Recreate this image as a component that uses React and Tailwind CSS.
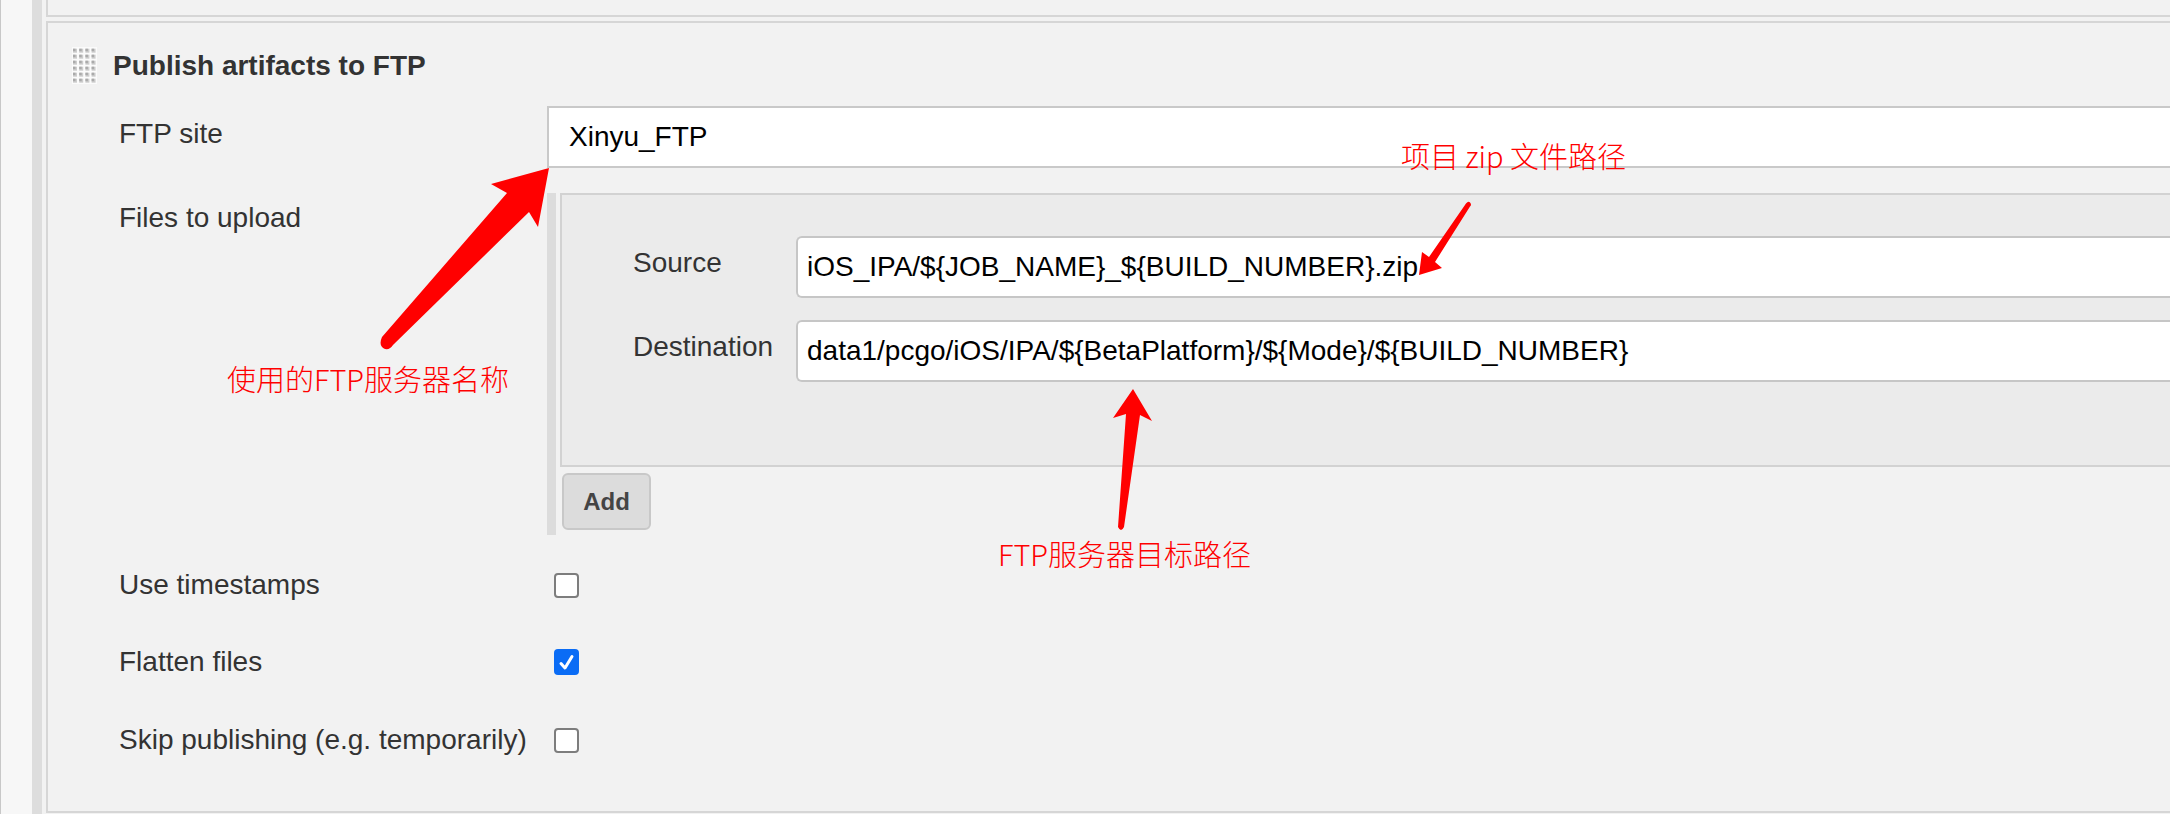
import React from 'react';

const Handle = () => {
    const cols = [0, 1, 2, 3];
    const rows = [0, 1, 2, 3, 4, 5];
    return (
        <svg width="25" height="37" viewBox="0 0 25 37" className="shrink-0">
            <rect width="25" height="37" fill="#fbfbfb" />
            {rows.map((r) =>
                cols.map((c) => (
                    <g key={`${r}-${c}`}>
                        <rect x={1 + c * 6.2} y={1.7 + r * 6} width="4" height="4" fill="#cdcdcd" />
                        <rect x={1 + c * 6.2} y={1.7 + r * 6} width="2.5" height="2.5" fill="#aaaaaa" />
                    </g>
                ))
            )}
        </svg>
    );
};

const Checkbox = ({ checked }) =>
    checked ? (
        <div className="ml-[7px] w-[25px] h-[26px] rounded-[4px] bg-[#0a6cf5] flex items-center justify-center">
            <svg width="17" height="17" viewBox="0 0 17 17">
                <path d="M3 9.5 L7 14 L14 2.5" fill="none" stroke="#fff" strokeWidth="3" strokeLinecap="round" strokeLinejoin="round" />
            </svg>
        </div>
    ) : (
        <div className="ml-[7px] w-[25px] h-[25px] rounded-[4px] bg-white border-2 border-[#7d7d7d]" />
    );

const labelCls = "text-[28px] leading-[34px] text-[#333]";

const Field = ({ label, value }) => (
    <div className="flex">
        <div className={`w-[163px] shrink-0 pt-[10px] ${labelCls}`}>{label}</div>
        <div className="flex-1 h-[62px] bg-white border-2 border-r-0 border-[#c6c6c6] rounded-l-[6px] pl-[9px] flex items-center text-[28px] text-black whitespace-nowrap overflow-hidden">
            {value}
        </div>
    </div>
);

const CheckRow = ({ label, checked, mt }) => (
    <div className={`${mt} h-[34px] flex items-center pl-[71px]`}>
        <div className={`w-[428px] shrink-0 ${labelCls}`}>{label}</div>
        <Checkbox checked={checked} />
    </div>
);

const App = () => {
    const note = "absolute whitespace-nowrap text-[29px] leading-[34px] font-light text-[#ff0000] font-['Noto_Sans_CJK_SC',sans-serif]";

    return (
        <div className="relative w-[2170px] h-[814px] overflow-hidden flex bg-[#f2f2f2] font-['Liberation_Sans',Arial,sans-serif]">
            <div className="w-[32px] shrink-0 bg-[#f7f7f7] border-l border-[#c8c8c8]" />
            <div className="w-[10px] shrink-0 bg-[#dddddd]" />
            <div className="flex-1 min-w-0 pl-[4px] flex flex-col">
                <div className="h-[17px] shrink-0 border-l-2 border-b-2 border-[#d6d6d6]" />
                <div className="mt-[4px] h-[792px] shrink-0 border-l-2 border-t-2 border-b-2 border-[#d6d6d6] flex flex-col">
                    {/* header */}
                    <div className="mt-[24px] h-[37px] pl-[24px] flex items-center gap-[16px]">
                        <Handle />
                        <span className="text-[28px] leading-[34px] font-bold text-[#333]">Publish artifacts to FTP</span>
                    </div>

                    {/* FTP site */}
                    <div className="mt-[22px] flex pl-[71px]">
                        <div className={`w-[428px] shrink-0 pt-[11px] ${labelCls}`}>FTP site</div>
                        <div className="flex-1 h-[62px] bg-white border-2 border-r-0 border-[#c9c9c9] pl-[20px] flex items-center text-[28px] text-black">
                            Xinyu_FTP
                        </div>
                    </div>

                    {/* Files to upload */}
                    <div className="mt-[25px] flex pl-[71px]">
                        <div className={`w-[428px] shrink-0 pt-[8px] ${labelCls}`}>Files to upload</div>
                        <div className="flex-1 min-w-0 flex">
                            <div className="w-[9px] shrink-0 bg-[#dcdcdc]" />
                            <div className="ml-[4px] flex-1 min-w-0 flex flex-col pb-[5px]">
                                <div className="border-2 border-r-0 border-[#d2d2d2] bg-[#ebebeb] pl-[71px] pt-[41px] pb-[83px] flex flex-col gap-[22px]">
                                    <Field label="Source" value="iOS_IPA/${JOB_NAME}_${BUILD_NUMBER}.zip" />
                                    <Field label="Destination" value="data1/pcgo/iOS/IPA/${BetaPlatform}/${Mode}/${BUILD_NUMBER}" />
                                </div>
                                <button className="mt-[6px] ml-[2px] w-[89px] h-[57px] rounded-[6px] bg-[#dcdcdc] border-2 border-[#c8c8c8] text-[24px] font-bold text-[#444]">
                                    Add
                                </button>
                            </div>
                        </div>
                    </div>

                    <CheckRow label="Use timestamps" mt="mt-[33px]" />
                    <CheckRow label="Flatten files" checked mt="mt-[43px]" />
                    <CheckRow label="Skip publishing (e.g. temporarily)" mt="mt-[44px]" />
                </div>
            </div>

            {/* annotations */}
            <svg className="absolute inset-0 pointer-events-none" width="2170" height="814" viewBox="0 0 2170 814">
                <path
                    d="M549,168 L491,184 L507,193 L382,337 Q378,346 385,349 Q390,350 393,345 L529,212 L538,227 Z"
                    fill="#ff0000"
                />
                <path
                    d="M1419,275 L1422,252 L1429,257 L1466,203.5 Q1469,200 1471,204 Q1471,206 1470,206.5 L1435,262 L1442,268 Z"
                    fill="#ff0000"
                />
                <path
                    d="M1133,389 L1152,421 L1140,415 L1124,527 Q1121,533 1118,527 L1126,414 L1113,418 Z"
                    fill="#ff0000"
                />
            </svg>
            <span className={`${note} left-[1401px] top-[138px]`}>项目 zip 文件路径</span>
            <span className={`${note} left-[227px] top-[361px]`}>使用的FTP服务器名称</span>
            <span className={`${note} left-[998px] top-[536px]`}>FTP服务器目标路径</span>
        </div>
    );
};

export default App;
